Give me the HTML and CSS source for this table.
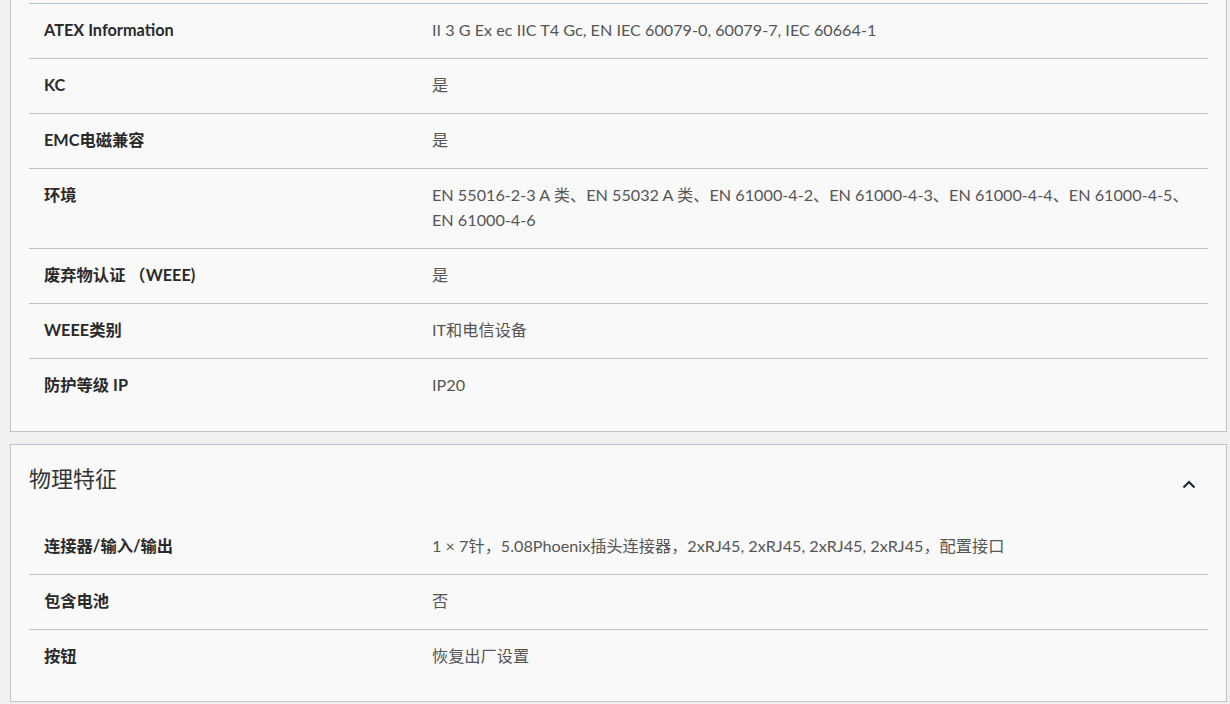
FILE: index.html
```html
<!DOCTYPE html>
<html lang="zh">
<head>
<meta charset="utf-8">
<link rel="stylesheet" href="styles.css">
</head>
<body>
<div class="page">
  <section class="card card-scrolled">
    <div class="rows">
      <div class="row"><div class="label">ATEX Information</div><div class="value">II 3 G Ex ec IIC T4 Gc, EN IEC 60079-0, 60079-7, IEC 60664-1</div></div>
      <div class="row"><div class="label">KC</div><div class="value">是</div></div>
      <div class="row"><div class="label">EMC电磁兼容</div><div class="value">是</div></div>
      <div class="row"><div class="label">环境</div><div class="value">EN 55016-2-3 A 类、EN 55032 A 类、EN 61000-4-2、EN 61000-4-3、EN 61000-4-4、EN 61000-4-5、EN 61000-4-6</div></div>
      <div class="row"><div class="label">废弃物认证 （WEEE)</div><div class="value">是</div></div>
      <div class="row"><div class="label">WEEE类别</div><div class="value">IT和电信设备</div></div>
      <div class="row"><div class="label">防护等级 IP</div><div class="value">IP20</div></div>
    </div>
  </section>
  <section class="card">
    <header class="card-head">
      <h2 class="card-title">物理特征</h2>
      <svg class="chevron" width="14" height="9" viewBox="0 0 14 9"><path d="M1.5 7.5 L7 2 L12.5 7.5" fill="none" stroke="#1f2a36" stroke-width="2.2"/></svg>
    </header>
    <div class="rows">
      <div class="row first"><div class="label">连接器/输入/输出</div><div class="value">1 × 7针，5.08Phoenix插头连接器，2xRJ45, 2xRJ45, 2xRJ45, 2xRJ45，配置接口</div></div>
      <div class="row"><div class="label">包含电池</div><div class="value">否</div></div>
      <div class="row"><div class="label">按钮</div><div class="value">恢复出厂设置</div></div>
    </div>
  </section>
</div>
</body>
</html>
```
FILE: styles.css
```css
html, body {
  margin: 0;
  padding: 0;
  background: #eff0f2;
  font-family: Lato, "Noto Sans CJK SC", sans-serif;
  overflow: hidden;
}
.page {
  padding: 0 3px 0 10px;
  display: flex;
  flex-direction: column;
  gap: 12px;
}
.card {
  background: #f9f9f9;
  border: 1px solid #bcc3ca;
  padding: 0 18px 17px 18px;
}
.card-scrolled {
  margin-top: -20px;
  border-top: none;
  padding-top: 23px;
  padding-bottom: 18px;
}
.row {
  display: flex;
  border-top: 1px solid #b8c1cb;
  padding: 13px 0 16px 15px;
  line-height: 25px;
}
.row.first {
  border-top: none;
}
.label {
  width: 388px;
  flex: none;
  font-weight: 700;
  font-size: 16.3px;
  color: #2a2a2a;
}
.value {
  flex: 1;
  font-size: 16.2px;
  color: #555555;
  padding-right: 10px;
}
.card-head {
  display: flex;
  align-items: center;
  justify-content: space-between;
  height: 75px;
}
.card-title {
  margin: 0 0 12px 0;
  font-size: 22px;
  font-weight: 400;
  color: #333333;
}
.chevron {
  margin-right: 12px;
  margin-top: 4px;
}
```
